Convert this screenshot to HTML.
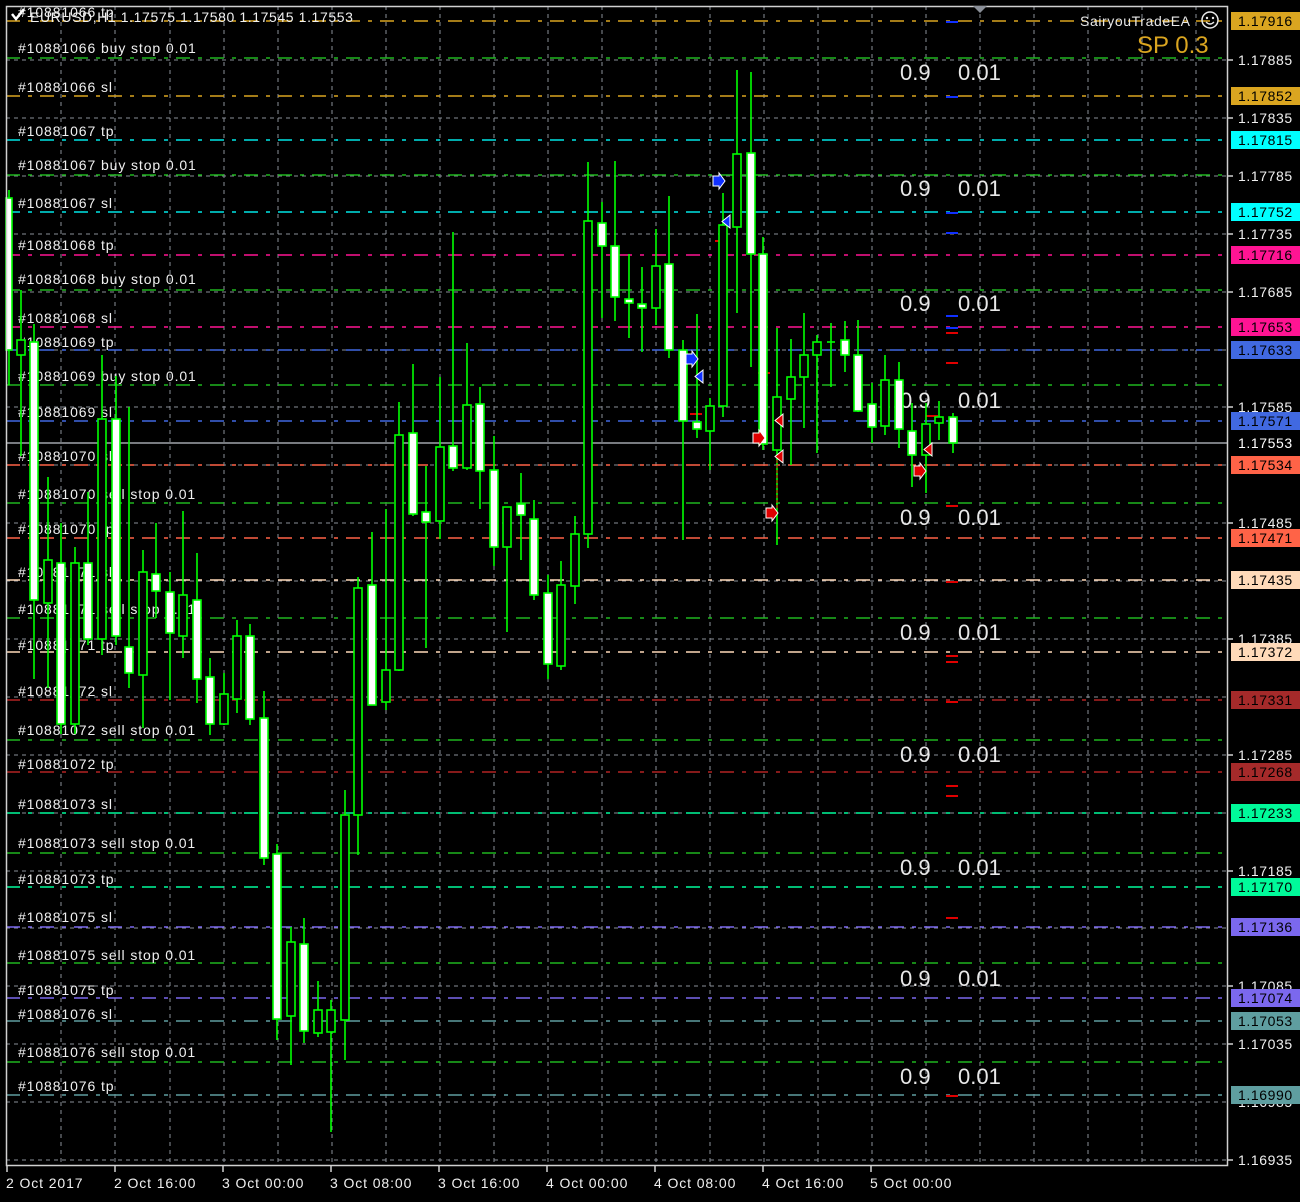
<!DOCTYPE html>
<html><head><meta charset="utf-8"><style>
html,body{margin:0;padding:0;background:#000;width:1300px;height:1202px;overflow:hidden}
svg{display:block}
text{font-family:"Liberation Sans",sans-serif}
.l{letter-spacing:0.9px}
.a{letter-spacing:0.6px}
</style></head><body>
<svg width="1300" height="1202" viewBox="0 0 1300 1202" xmlns="http://www.w3.org/2000/svg">
<rect width="1300" height="1202" fill="#000"/>
<g stroke="#8a8f98" stroke-width="1" stroke-dasharray="4 4">
<line x1="61" y1="6" x2="61" y2="1166"/><line x1="115" y1="6" x2="115" y2="1166"/><line x1="170" y1="6" x2="170" y2="1166"/><line x1="224" y1="6" x2="224" y2="1166"/><line x1="278" y1="6" x2="278" y2="1166"/><line x1="332" y1="6" x2="332" y2="1166"/><line x1="386" y1="6" x2="386" y2="1166"/><line x1="440" y1="6" x2="440" y2="1166"/><line x1="494" y1="6" x2="494" y2="1166"/><line x1="548" y1="6" x2="548" y2="1166"/><line x1="602" y1="6" x2="602" y2="1166"/><line x1="656" y1="6" x2="656" y2="1166"/><line x1="710" y1="6" x2="710" y2="1166"/><line x1="764" y1="6" x2="764" y2="1166"/><line x1="818" y1="6" x2="818" y2="1166"/><line x1="872" y1="6" x2="872" y2="1166"/><line x1="926" y1="6" x2="926" y2="1166"/><line x1="980" y1="6" x2="980" y2="1166"/><line x1="1034" y1="6" x2="1034" y2="1166"/><line x1="1088" y1="6" x2="1088" y2="1166"/><line x1="1142" y1="6" x2="1142" y2="1166"/><line x1="1196" y1="6" x2="1196" y2="1166"/>
</g>
<g stroke="#8a8f98" stroke-width="1" stroke-dasharray="4 4">
<line x1="6" y1="60" x2="1228" y2="60"/><line x1="6" y1="118" x2="1228" y2="118"/><line x1="6" y1="176" x2="1228" y2="176"/><line x1="6" y1="234" x2="1228" y2="234"/><line x1="6" y1="292" x2="1228" y2="292"/><line x1="6" y1="350" x2="1228" y2="350"/><line x1="6" y1="407" x2="1228" y2="407"/><line x1="6" y1="465" x2="1228" y2="465"/><line x1="6" y1="523" x2="1228" y2="523"/><line x1="6" y1="581" x2="1228" y2="581"/><line x1="6" y1="639" x2="1228" y2="639"/><line x1="6" y1="697" x2="1228" y2="697"/><line x1="6" y1="755" x2="1228" y2="755"/><line x1="6" y1="813" x2="1228" y2="813"/><line x1="6" y1="871" x2="1228" y2="871"/><line x1="6" y1="928" x2="1228" y2="928"/><line x1="6" y1="986" x2="1228" y2="986"/><line x1="6" y1="1044" x2="1228" y2="1044"/><line x1="6" y1="1102" x2="1228" y2="1102"/><line x1="6" y1="1160" x2="1228" y2="1160"/>
</g>
<g stroke-width="1.5" stroke-dasharray="14 8 4 8">
<line x1="6" y1="21" x2="1228" y2="21" stroke="#daa520"/>
<line x1="6" y1="96" x2="1228" y2="96" stroke="#daa520"/>
<line x1="6" y1="140" x2="1228" y2="140" stroke="#00e5e5"/>
<line x1="6" y1="212" x2="1228" y2="212" stroke="#00e5e5"/>
<line x1="6" y1="255" x2="1228" y2="255" stroke="#ff1493"/>
<line x1="6" y1="327" x2="1228" y2="327" stroke="#ff1493"/>
<line x1="6" y1="350" x2="1228" y2="350" stroke="#4169e1"/>
<line x1="6" y1="421" x2="1228" y2="421" stroke="#4169e1"/>
<line x1="6" y1="465" x2="1228" y2="465" stroke="#ff6347"/>
<line x1="6" y1="538" x2="1228" y2="538" stroke="#ff6347"/>
<line x1="6" y1="580" x2="1228" y2="580" stroke="#ffdab9"/>
<line x1="6" y1="652" x2="1228" y2="652" stroke="#ffdab9"/>
<line x1="6" y1="700" x2="1228" y2="700" stroke="#b22222"/>
<line x1="6" y1="772" x2="1228" y2="772" stroke="#b22222"/>
<line x1="6" y1="813" x2="1228" y2="813" stroke="#00fa9a"/>
<line x1="6" y1="887" x2="1228" y2="887" stroke="#00fa9a"/>
<line x1="6" y1="927" x2="1228" y2="927" stroke="#7b68ee"/>
<line x1="6" y1="998" x2="1228" y2="998" stroke="#7b68ee"/>
<line x1="6" y1="1021" x2="1228" y2="1021" stroke="#5f9ea0"/>
<line x1="6" y1="1095" x2="1228" y2="1095" stroke="#5f9ea0"/>
<g stroke="#1fb51f">
<line x1="6" y1="58" x2="1228" y2="58"/><line x1="6" y1="175" x2="1228" y2="175"/><line x1="6" y1="290" x2="1228" y2="290"/><line x1="6" y1="385" x2="1228" y2="385"/><line x1="6" y1="503" x2="1228" y2="503"/><line x1="6" y1="618" x2="1228" y2="618"/><line x1="6" y1="740" x2="1228" y2="740"/><line x1="6" y1="853" x2="1228" y2="853"/><line x1="6" y1="963" x2="1228" y2="963"/><line x1="6" y1="1062" x2="1228" y2="1062"/>
</g>
</g>
<line x1="6" y1="443" x2="1228" y2="443" stroke="#a0a4ab" stroke-width="1.5"/>
<g fill="#f0f0f0" font-size="14" class="l">
<text x="18" y="17">#10881066 tp</text>
<text x="18" y="53">#10881066 buy stop 0.01</text>
<text x="18" y="92">#10881066 sl</text>
<text x="18" y="136">#10881067 tp</text>
<text x="18" y="170">#10881067 buy stop 0.01</text>
<text x="18" y="208">#10881067 sl</text>
<text x="18" y="250">#10881068 tp</text>
<text x="18" y="284">#10881068 buy stop 0.01</text>
<text x="18" y="323">#10881068 sl</text>
<text x="18" y="347">#10881069 tp</text>
<text x="18" y="381">#10881069 buy stop 0.01</text>
<text x="18" y="417">#10881069 sl</text>
<text x="18" y="461">#10881070 sl</text>
<text x="18" y="499">#10881070 sell stop 0.01</text>
<text x="18" y="534">#10881070 tp</text>
<text x="18" y="577">#10881071 sl</text>
<text x="18" y="614">#10881071 sell stop 0.01</text>
<text x="18" y="650">#10881071 tp</text>
<text x="18" y="696">#10881072 sl</text>
<text x="18" y="735">#10881072 sell stop 0.01</text>
<text x="18" y="769">#10881072 tp</text>
<text x="18" y="809">#10881073 sl</text>
<text x="18" y="848">#10881073 sell stop 0.01</text>
<text x="18" y="884">#10881073 tp</text>
<text x="18" y="922">#10881075 sl</text>
<text x="18" y="960">#10881075 sell stop 0.01</text>
<text x="18" y="995">#10881075 tp</text>
<text x="18" y="1019">#10881076 sl</text>
<text x="18" y="1057">#10881076 sell stop 0.01</text>
<text x="18" y="1091">#10881076 tp</text>
</g>
<g fill="#e8e8e8" font-size="22">
<text x="900" y="80">0.9</text><text x="958" y="80">0.01</text>
<text x="900" y="196">0.9</text><text x="958" y="196">0.01</text>
<text x="900" y="311">0.9</text><text x="958" y="311">0.01</text>
<text x="900" y="408">0.9</text><text x="958" y="408">0.01</text>
<text x="900" y="525">0.9</text><text x="958" y="525">0.01</text>
<text x="900" y="640">0.9</text><text x="958" y="640">0.01</text>
<text x="900" y="762">0.9</text><text x="958" y="762">0.01</text>
<text x="900" y="875">0.9</text><text x="958" y="875">0.01</text>
<text x="900" y="986">0.9</text><text x="958" y="986">0.01</text>
<text x="900" y="1084">0.9</text><text x="958" y="1084">0.01</text>
</g>
<g stroke-width="2">
<line x1="946" y1="22" x2="958" y2="22" stroke="#1030ff"/><line x1="946" y1="97" x2="958" y2="97" stroke="#1030ff"/>
<line x1="946" y1="213" x2="958" y2="213" stroke="#1030ff"/><line x1="946" y1="233" x2="958" y2="233" stroke="#1030ff"/>
<line x1="946" y1="316" x2="958" y2="316" stroke="#1030ff"/><line x1="946" y1="328" x2="958" y2="328" stroke="#1030ff"/>
<line x1="946" y1="333" x2="958" y2="333" stroke="#e00000"/><line x1="946" y1="363" x2="958" y2="363" stroke="#e00000"/>
<line x1="946" y1="506" x2="958" y2="506" stroke="#e00000"/><line x1="946" y1="582" x2="958" y2="582" stroke="#e00000"/>
<line x1="946" y1="656" x2="958" y2="656" stroke="#e00000"/><line x1="946" y1="662" x2="958" y2="662" stroke="#e00000"/>
<line x1="946" y1="702" x2="958" y2="702" stroke="#e00000"/><line x1="946" y1="786" x2="958" y2="786" stroke="#e00000"/>
<line x1="946" y1="796" x2="958" y2="796" stroke="#e00000"/><line x1="946" y1="918" x2="958" y2="918" stroke="#e00000"/>
<line x1="946" y1="1096" x2="958" y2="1096" stroke="#e00000"/>
<line x1="715" y1="241" x2="727" y2="241" stroke="#e00000"/><line x1="690" y1="414" x2="702" y2="414" stroke="#e00000"/>
<line x1="758" y1="373" x2="770" y2="373" stroke="#e00000"/><line x1="926" y1="416" x2="938" y2="416" stroke="#e00000"/>
</g>
<g stroke="#00ff00" stroke-width="1.6">
<line x1="9" y1="190" x2="9" y2="385"/><rect x="6" y="198" width="6" height="152" fill="#fff"/>
<line x1="21" y1="290" x2="21" y2="456"/><rect x="17" y="340" width="8" height="15" fill="#000"/>
<line x1="34" y1="324" x2="34" y2="679"/><rect x="30" y="342" width="8" height="258" fill="#fff"/>
<line x1="48" y1="477" x2="48" y2="688"/><rect x="44" y="560" width="8" height="43" fill="#000"/>
<line x1="61" y1="523" x2="61" y2="734"/><rect x="57" y="563" width="8" height="161" fill="#fff"/>
<line x1="75" y1="547" x2="75" y2="734"/><rect x="71" y="563" width="8" height="161" fill="#000"/>
<line x1="88" y1="492" x2="88" y2="645"/><rect x="84" y="563" width="8" height="76" fill="#fff"/>
<line x1="102" y1="355" x2="102" y2="655"/><rect x="98" y="419" width="8" height="220" fill="#000"/>
<line x1="116" y1="376" x2="116" y2="645"/><rect x="112" y="419" width="8" height="217" fill="#fff"/>
<line x1="129" y1="407" x2="129" y2="688"/><rect x="125" y="647" width="8" height="26" fill="#fff"/>
<line x1="143" y1="550" x2="143" y2="728"/><rect x="139" y="572" width="8" height="103" fill="#000"/>
<line x1="156" y1="523" x2="156" y2="618"/><rect x="152" y="574" width="8" height="17" fill="#fff"/>
<line x1="170" y1="572" x2="170" y2="700"/><rect x="166" y="592" width="8" height="41" fill="#fff"/>
<line x1="183" y1="511" x2="183" y2="658"/><rect x="179" y="595" width="8" height="41" fill="#000"/>
<line x1="197" y1="553" x2="197" y2="703"/><rect x="193" y="600" width="8" height="79" fill="#fff"/>
<line x1="210" y1="658" x2="210" y2="735"/><rect x="206" y="677" width="8" height="47" fill="#fff"/>
<line x1="224" y1="673" x2="224" y2="725"/><rect x="220" y="694" width="8" height="30" fill="#000"/>
<line x1="237" y1="620" x2="237" y2="713"/><rect x="233" y="636" width="8" height="63" fill="#000"/>
<line x1="250" y1="624" x2="250" y2="725"/><rect x="246" y="636" width="8" height="83" fill="#fff"/>
<line x1="264" y1="691" x2="264" y2="865"/><rect x="260" y="718" width="8" height="140" fill="#fff"/>
<line x1="277" y1="844" x2="277" y2="1040"/><rect x="273" y="854" width="8" height="165" fill="#fff"/>
<line x1="291" y1="927" x2="291" y2="1065"/><rect x="287" y="942" width="8" height="74" fill="#000"/>
<line x1="304" y1="918" x2="304" y2="1043"/><rect x="300" y="944" width="8" height="87" fill="#fff"/>
<line x1="318" y1="981" x2="318" y2="1037"/><rect x="314" y="1010" width="8" height="23" fill="#000"/>
<line x1="331" y1="1000" x2="331" y2="1132"/><rect x="327" y="1010" width="8" height="22" fill="#000"/>
<line x1="345" y1="790" x2="345" y2="1060"/><rect x="341" y="815" width="8" height="205" fill="#000"/>
<line x1="358" y1="577" x2="358" y2="855"/><rect x="354" y="588" width="8" height="227" fill="#000"/>
<line x1="372" y1="532" x2="372" y2="705"/><rect x="368" y="585" width="8" height="120" fill="#fff"/>
<line x1="386" y1="509" x2="386" y2="710"/><rect x="382" y="670" width="8" height="32" fill="#000"/>
<line x1="399" y1="402" x2="399" y2="671"/><rect x="395" y="435" width="8" height="235" fill="#000"/>
<line x1="413" y1="364" x2="413" y2="516"/><rect x="409" y="433" width="8" height="81" fill="#fff"/>
<line x1="426" y1="466" x2="426" y2="648"/><rect x="422" y="512" width="8" height="10" fill="#fff"/>
<line x1="440" y1="377" x2="440" y2="539"/><rect x="436" y="447" width="8" height="74" fill="#000"/>
<line x1="453" y1="232" x2="453" y2="471"/><rect x="449" y="446" width="8" height="22" fill="#fff"/>
<line x1="467" y1="343" x2="467" y2="470"/><rect x="463" y="405" width="8" height="63" fill="#000"/>
<line x1="480" y1="387" x2="480" y2="509"/><rect x="476" y="404" width="8" height="67" fill="#fff"/>
<line x1="494" y1="436" x2="494" y2="566"/><rect x="490" y="470" width="8" height="77" fill="#fff"/>
<line x1="507" y1="507" x2="507" y2="632"/><rect x="503" y="507" width="8" height="40" fill="#000"/>
<line x1="521" y1="473" x2="521" y2="560"/><rect x="517" y="504" width="8" height="11" fill="#fff"/>
<line x1="534" y1="500" x2="534" y2="600"/><rect x="530" y="519" width="8" height="76" fill="#fff"/>
<line x1="548" y1="575" x2="548" y2="679"/><rect x="544" y="593" width="8" height="71" fill="#fff"/>
<line x1="561" y1="561" x2="561" y2="670"/><rect x="557" y="585" width="8" height="81" fill="#000"/>
<line x1="575" y1="516" x2="575" y2="604"/><rect x="571" y="534" width="8" height="52" fill="#000"/>
<line x1="588" y1="162" x2="588" y2="548"/><rect x="584" y="221" width="8" height="313" fill="#000"/>
<line x1="602" y1="202" x2="602" y2="318"/><rect x="598" y="223" width="8" height="23" fill="#fff"/>
<line x1="615" y1="161" x2="615" y2="321"/><rect x="611" y="246" width="8" height="51" fill="#fff"/>
<line x1="629" y1="254" x2="629" y2="338"/><rect x="625" y="299" width="8" height="4" fill="#fff"/>
<line x1="642" y1="267" x2="642" y2="352"/><rect x="638" y="304" width="8" height="4" fill="#fff"/>
<line x1="656" y1="229" x2="656" y2="325"/><rect x="652" y="266" width="8" height="42" fill="#000"/>
<line x1="669" y1="196" x2="669" y2="358"/><rect x="665" y="264" width="8" height="86" fill="#fff"/>
<line x1="683" y1="340" x2="683" y2="540"/><rect x="679" y="350" width="8" height="71" fill="#fff"/>
<line x1="697" y1="314" x2="697" y2="438"/><rect x="693" y="422" width="8" height="7" fill="#fff"/>
<line x1="710" y1="398" x2="710" y2="470"/><rect x="706" y="406" width="8" height="25" fill="#000"/>
<line x1="723" y1="193" x2="723" y2="417"/><rect x="719" y="225" width="8" height="181" fill="#000"/>
<line x1="737" y1="70" x2="737" y2="313"/><rect x="733" y="154" width="8" height="73" fill="#000"/>
<line x1="751" y1="72" x2="751" y2="367"/><rect x="747" y="153" width="8" height="101" fill="#fff"/>
<line x1="763" y1="237" x2="763" y2="450"/><rect x="759" y="254" width="8" height="190" fill="#fff"/>
<line x1="777" y1="328" x2="777" y2="545"/><rect x="773" y="397" width="8" height="53" fill="#000"/>
<line x1="791" y1="339" x2="791" y2="465"/><rect x="787" y="377" width="8" height="22" fill="#000"/>
<line x1="804" y1="313" x2="804" y2="428"/><rect x="800" y="355" width="8" height="22" fill="#000"/>
<line x1="817" y1="335" x2="817" y2="453"/><rect x="813" y="342" width="8" height="13" fill="#000"/>
<line x1="831" y1="323" x2="831" y2="387"/><line x1="827" y1="342" x2="835" y2="342"/>
<line x1="845" y1="321" x2="845" y2="372"/><rect x="841" y="340" width="8" height="15" fill="#fff"/>
<line x1="858" y1="320" x2="858" y2="412"/><rect x="854" y="355" width="8" height="56" fill="#fff"/>
<line x1="872" y1="383" x2="872" y2="443"/><rect x="868" y="404" width="8" height="23" fill="#fff"/>
<line x1="885" y1="355" x2="885" y2="435"/><rect x="881" y="380" width="8" height="46" fill="#000"/>
<line x1="899" y1="362" x2="899" y2="448"/><rect x="895" y="380" width="8" height="49" fill="#fff"/>
<line x1="912" y1="403" x2="912" y2="487"/><rect x="908" y="431" width="8" height="24" fill="#fff"/>
<line x1="926" y1="403" x2="926" y2="493"/><rect x="922" y="424" width="8" height="31" fill="#000"/>
<line x1="939" y1="401" x2="939" y2="440"/><rect x="935" y="417" width="8" height="6" fill="#000"/>
<line x1="953" y1="413" x2="953" y2="453"/><rect x="949" y="417" width="8" height="26" fill="#fff"/>
</g>
<g stroke="#fff" stroke-width="1">
<path d="M713 176 l6 0 0 -3 6 8 -6 8 0 -3 -6 0z" fill="#1030ff"/>
<path d="M730 215 l0 13 -8 -6.5z" fill="#1030ff"/>
<path d="M686 354 l6 0 0 -3 6 8 -6 8 0 -3 -6 0z" fill="#1030ff"/>
<path d="M703 370 l0 13 -8 -6.5z" fill="#1030ff"/>
<path d="M753 433 l6 0 0 -3 6 8 -6 8 0 -3 -6 0z" fill="#e00000"/>
<path d="M783 414 l0 13 -8 -6.5z" fill="#e00000"/>
<path d="M783 450 l0 13 -8 -6.5z" fill="#e00000"/>
<path d="M766 508 l6 0 0 -3 6 8 -6 8 0 -3 -6 0z" fill="#e00000"/>
<path d="M914 466 l6 0 0 -3 6 8 -6 8 0 -3 -6 0z" fill="#e00000"/>
<path d="M932 443 l0 13 -8 -6.5z" fill="#e00000"/>
</g>
<line x1="777" y1="460" x2="777" y2="510" stroke="#e00000" stroke-dasharray="3 2"/>
<rect x="6.5" y="6.5" width="1221" height="1159" fill="none" stroke="#d0d0d0" stroke-width="1.5"/>
<path d="M973 6 l7 7 7 -7z" fill="#8a8f98"/>
<path d="M12 14 l4 5 8 -10" stroke="#fff" stroke-width="2.5" fill="none"/>
<text x="30" y="22" fill="#f0f0f0" font-size="14" class="a">EURUSD,H1  1.17575 1.17580 1.17545 1.17553</text>
<text x="1080" y="26" fill="#e8e8e8" font-size="14" class="a">SairyouTradeEA</text>
<circle cx="1210" cy="20" r="8" fill="none" stroke="#e8e8e8" stroke-width="1.5"/>
<circle cx="1207" cy="18" r="1.2" fill="#e8e8e8"/><circle cx="1213" cy="18" r="1.2" fill="#e8e8e8"/>
<path d="M1206 22 q4 4 8 0" stroke="#e8e8e8" fill="none" stroke-width="1.3"/>
<text x="1137" y="53" fill="#daa520" font-size="24">SP 0.3</text>
<g stroke="#d0d0d0" stroke-width="1.5">
<line x1="1228" y1="60" x2="1233" y2="60"/><line x1="1228" y1="118" x2="1233" y2="118"/><line x1="1228" y1="176" x2="1233" y2="176"/><line x1="1228" y1="234" x2="1233" y2="234"/><line x1="1228" y1="292" x2="1233" y2="292"/><line x1="1228" y1="407" x2="1233" y2="407"/><line x1="1228" y1="523" x2="1233" y2="523"/><line x1="1228" y1="639" x2="1233" y2="639"/><line x1="1228" y1="755" x2="1233" y2="755"/><line x1="1228" y1="871" x2="1233" y2="871"/><line x1="1228" y1="986" x2="1233" y2="986"/><line x1="1228" y1="1044" x2="1233" y2="1044"/><line x1="1228" y1="1160" x2="1233" y2="1160"/>
<line x1="7" y1="1166" x2="7" y2="1172"/><line x1="115" y1="1166" x2="115" y2="1172"/><line x1="223" y1="1166" x2="223" y2="1172"/><line x1="331" y1="1166" x2="331" y2="1172"/><line x1="439" y1="1166" x2="439" y2="1172"/><line x1="547" y1="1166" x2="547" y2="1172"/><line x1="655" y1="1166" x2="655" y2="1172"/><line x1="763" y1="1166" x2="763" y2="1172"/><line x1="871" y1="1166" x2="871" y2="1172"/>
</g>
<g fill="#f0f0f0" font-size="14" class="a">
<text x="1238" y="65">1.17885</text><text x="1238" y="123">1.17835</text><text x="1238" y="181">1.17785</text><text x="1238" y="239">1.17735</text><text x="1238" y="297">1.17685</text><text x="1238" y="412">1.17585</text><text x="1238" y="528">1.17485</text><text x="1238" y="644">1.17385</text><text x="1238" y="760">1.17285</text><text x="1238" y="876">1.17185</text><text x="1238" y="991">1.17085</text><text x="1238" y="1049">1.17035</text><text x="1238" y="1107">1.16985</text><text x="1238" y="1165">1.16935</text>
</g>
<g font-size="14" class="a">
<rect x="1231" y="12" width="69" height="18" fill="#daa520"/><text x="1238" y="26" fill="#000">1.17916</text>
<rect x="1231" y="87" width="69" height="18" fill="#daa520"/><text x="1238" y="101" fill="#000">1.17852</text>
<rect x="1231" y="131" width="69" height="18" fill="#00ffff"/><text x="1238" y="145" fill="#000">1.17815</text>
<rect x="1231" y="203" width="69" height="18" fill="#00ffff"/><text x="1238" y="217" fill="#000">1.17752</text>
<rect x="1231" y="246" width="69" height="18" fill="#ff1493"/><text x="1238" y="260" fill="#000">1.17716</text>
<rect x="1231" y="318" width="69" height="18" fill="#ff1493"/><text x="1238" y="332" fill="#000">1.17653</text>
<rect x="1231" y="341" width="69" height="18" fill="#4169e1"/><text x="1238" y="355" fill="#000">1.17633</text>
<rect x="1231" y="412" width="69" height="18" fill="#4169e1"/><text x="1238" y="426" fill="#000">1.17571</text>
<rect x="1231" y="434" width="69" height="18" fill="#000"/><text x="1238" y="448" fill="#fff">1.17553</text>
<rect x="1231" y="456" width="69" height="18" fill="#ff6347"/><text x="1238" y="470" fill="#000">1.17534</text>
<rect x="1231" y="529" width="69" height="18" fill="#ff6347"/><text x="1238" y="543" fill="#000">1.17471</text>
<rect x="1231" y="571" width="69" height="18" fill="#ffdab9"/><text x="1238" y="585" fill="#000">1.17435</text>
<rect x="1231" y="643" width="69" height="18" fill="#ffdab9"/><text x="1238" y="657" fill="#000">1.17372</text>
<rect x="1231" y="691" width="69" height="18" fill="#a52a2a"/><text x="1238" y="705" fill="#000">1.17331</text>
<rect x="1231" y="763" width="69" height="18" fill="#a52a2a"/><text x="1238" y="777" fill="#000">1.17268</text>
<rect x="1231" y="804" width="69" height="18" fill="#00fa9a"/><text x="1238" y="818" fill="#000">1.17233</text>
<rect x="1231" y="878" width="69" height="18" fill="#00fa9a"/><text x="1238" y="892" fill="#000">1.17170</text>
<rect x="1231" y="918" width="69" height="18" fill="#7b68ee"/><text x="1238" y="932" fill="#000">1.17136</text>
<rect x="1231" y="989" width="69" height="18" fill="#7b68ee"/><text x="1238" y="1003" fill="#000">1.17074</text>
<rect x="1231" y="1012" width="69" height="18" fill="#5f9ea0"/><text x="1238" y="1026" fill="#000">1.17053</text>
<rect x="1231" y="1086" width="69" height="18" fill="#5f9ea0"/><text x="1238" y="1100" fill="#000">1.16990</text>
</g>
<g fill="#f0f0f0" font-size="14" class="l">
<text x="6" y="1188">2 Oct 2017</text><text x="114" y="1188">2 Oct 16:00</text><text x="222" y="1188">3 Oct 00:00</text><text x="330" y="1188">3 Oct 08:00</text><text x="438" y="1188">3 Oct 16:00</text><text x="546" y="1188">4 Oct 00:00</text><text x="654" y="1188">4 Oct 08:00</text><text x="762" y="1188">4 Oct 16:00</text><text x="870" y="1188">5 Oct 00:00</text>
</g>
</svg>
</body></html>
